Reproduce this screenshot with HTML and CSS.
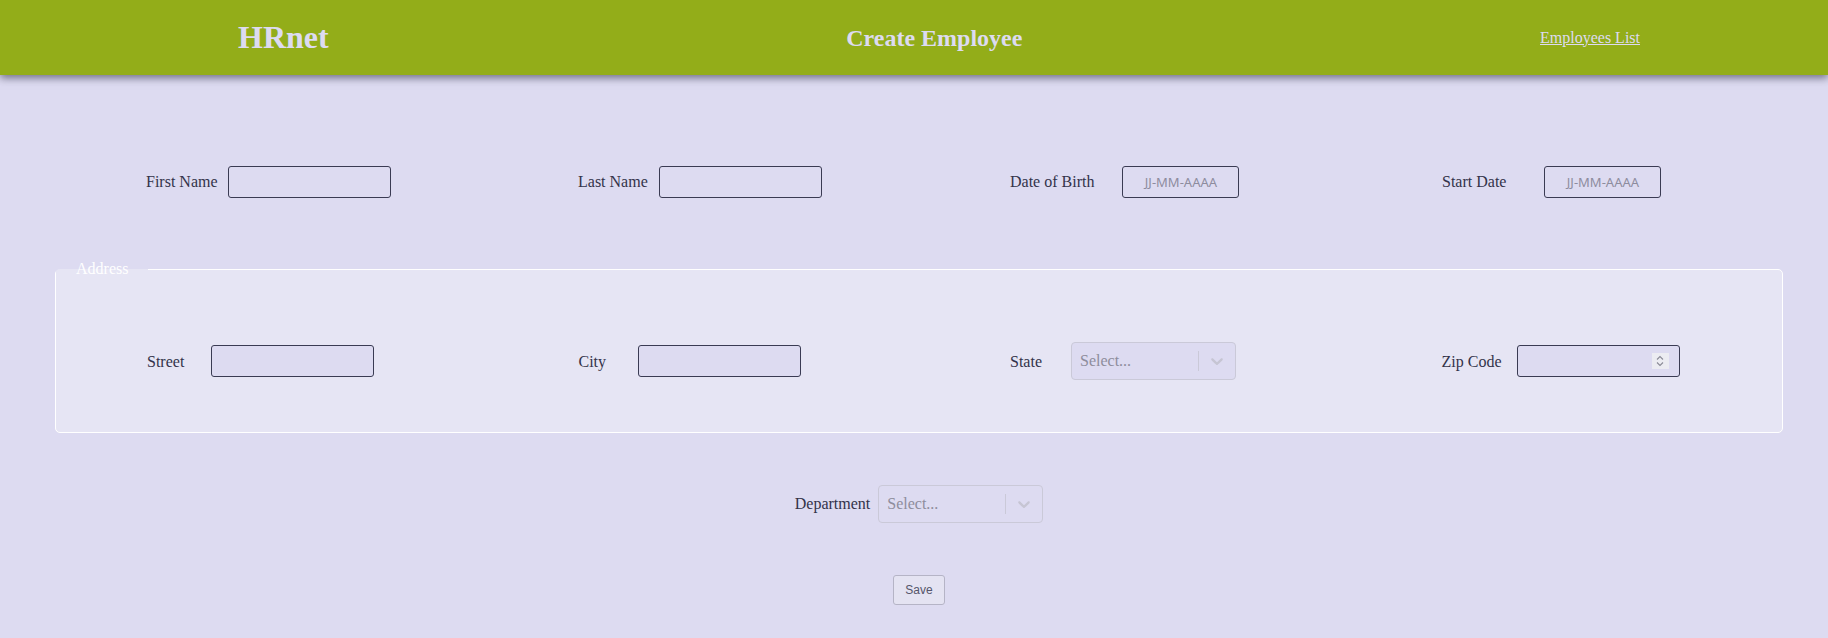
FILE: index.html
```html
<!DOCTYPE html>
<html lang="fr">
<head>
<meta charset="utf-8">
<title>HRnet - Create Employee</title>
<link rel="stylesheet" href="styles.css">
</head>
<body>
<header class="top-bar">
  <h1 class="brand">HRnet</h1>
  <h2 class="page-title">Create Employee</h2>
  <a class="nav-link" href="#">Employees List</a>
</header>
<main class="content">
  <form class="employee-form">
    <div class="field-row">
      <div class="field">
        <label class="field-label label-first" for="first-name">First Name</label>
        <input class="text-input" id="first-name" type="text">
      </div>
      <div class="field">
        <label class="field-label label-last" for="last-name">Last Name</label>
        <input class="text-input" id="last-name" type="text">
      </div>
      <div class="field">
        <label class="field-label label-birth" for="birth">Date of Birth</label>
        <input class="date-input" id="birth" type="text" placeholder="JJ-MM-AAAA">
      </div>
      <div class="field">
        <label class="field-label label-start" for="start">Start Date</label>
        <input class="date-input" id="start" type="text" placeholder="JJ-MM-AAAA">
      </div>
    </div>

    <fieldset class="address">
      <legend class="address-legend">Address</legend>
      <div class="field-row">
        <div class="field">
          <label class="field-label label-street" for="street">Street</label>
          <input class="text-input" id="street" type="text">
        </div>
        <div class="field">
          <label class="field-label label-city" for="city">City</label>
          <input class="text-input" id="city" type="text">
        </div>
        <div class="field">
          <label class="field-label label-state">State</label>
          <div class="select">
            <div class="select-value">Select...</div>
            <div class="select-indicators">
              <span class="select-separator"></span>
              <span class="select-arrow">
                <svg viewBox="0 0 20 20" width="20" height="20" aria-hidden="true"><path d="M4.516 7.548c0.436-0.446 1.043-0.481 1.576 0l3.908 3.747 3.908-3.747c0.533-0.481 1.141-0.446 1.574 0 0.436 0.445 0.408 1.197 0 1.615-0.406 0.418-4.695 4.502-4.695 4.502-0.217 0.223-0.502 0.335-0.787 0.335s-0.57-0.112-0.789-0.335c0 0-4.287-4.084-4.695-4.502s-0.436-1.170 0-1.615z"/></svg>
              </span>
            </div>
          </div>
        </div>
        <div class="field">
          <label class="field-label label-zip" for="zip">Zip Code</label>
          <div class="number-input">
            <input class="number-field" id="zip" type="text">
            <span class="spinner">
              <svg viewBox="0 0 16 16" width="16" height="16" aria-hidden="true"><path d="M5 6.5 L8 3.5 L11 6.5 M5 9.5 L8 12.5 L11 9.5" fill="none" stroke="#8a8a96" stroke-width="1.1"/></svg>
            </span>
          </div>
        </div>
      </div>
    </fieldset>

    <div class="department-row">
      <label class="field-label">Department</label>
      <div class="select">
        <div class="select-value">Select...</div>
        <div class="select-indicators">
          <span class="select-separator"></span>
          <span class="select-arrow">
            <svg viewBox="0 0 20 20" width="20" height="20" aria-hidden="true"><path d="M4.516 7.548c0.436-0.446 1.043-0.481 1.576 0l3.908 3.747 3.908-3.747c0.533-0.481 1.141-0.446 1.574 0 0.436 0.445 0.408 1.197 0 1.615-0.406 0.418-4.695 4.502-4.695 4.502-0.217 0.223-0.502 0.335-0.787 0.335s-0.57-0.112-0.789-0.335c0 0-4.287-4.084-4.695-4.502s-0.436-1.170 0-1.615z"/></svg>
          </span>
        </div>
      </div>
    </div>

    <div class="actions">
      <button class="save-button" type="button">Save</button>
    </div>
  </form>
</main>
</body>
</html>
```

FILE: styles.css
```css
* {
  box-sizing: border-box;
}

body {
  margin: 0;
  background: #dddbf1;
  font-family: "Liberation Serif", "Times New Roman", serif;
  font-size: 16px;
  color: #33334a;
}

/* Header */
.top-bar {
  position: relative;
  z-index: 1;
  height: 75px;
  background: #93ad19;
  display: flex;
  align-items: center;
  justify-content: space-between;
  padding: 0 188px 0 238px;
  box-shadow: 0 3px 8px rgba(40, 40, 60, 0.6);
  color: #dddbf1;
}

.brand {
  margin: 0;
  font-size: 32px;
  font-weight: bold;
  line-height: 37px;
}

.page-title {
  margin: 0;
  font-size: 24px;
  font-weight: bold;
  line-height: 28px;
}

.nav-link {
  color: #dddbf1;
  font-size: 16px;
  line-height: 18px;
}

/* Content */
.content {
  padding: 91px 45px 0 55px;
}

.field-row {
  display: grid;
  grid-template-columns: repeat(4, 1fr);
  align-items: center;
}

.field {
  display: flex;
  align-items: center;
  padding-left: 91px;
}

.field-label {
  line-height: 18px;
  white-space: nowrap;
}

.address .field-label {
  padding-top: 2px;
}

.label-first { margin-right: 10px; }
.label-last { margin-right: 11px; }
.label-birth { margin-right: 28px; }
.label-start { margin-right: 38px; }
.label-street { margin-right: 27px; }
.label-city { margin-right: 32px; }
.label-state { margin-right: 29px; }
.label-zip { margin-right: 15px; }

.text-input,
.date-input {
  height: 32px;
  border: 1px solid #3a3b53;
  border-radius: 3px;
  background: #dddbf1;
  padding: 1px 4px;
  font-family: "Noto Sans", "Liberation Sans", sans-serif;
  font-size: 13px;
  color: #33334a;
}

.text-input {
  width: 163px;
}

.date-input {
  width: 117px;
  text-align: center;
}

.date-input::placeholder {
  color: #8d8c9e;
}

/* Address fieldset */
.address {
  margin: 62px 0 0;
  padding: 64px 0 52px;
  border: 1px solid #ffffff;
  border-radius: 5px;
  background: #e6e5f4;
}

.address-legend {
  padding: 0 20px;
  color: #ffffff;
  line-height: 18px;
}

/* Select (react-select look) */
.select {
  display: flex;
  width: 165px;
  height: 38px;
  border: 1px solid #cac9d8;
  border-radius: 4px;
  background: #dddbf1;
}

.select-value {
  flex: 1;
  display: flex;
  align-items: center;
  padding: 2px 8px;
  color: #8e8d9c;
}

.select-indicators {
  display: flex;
  align-items: stretch;
}

.select-separator {
  width: 1px;
  margin: 8px 0;
  background: #cac9d8;
}

.select-arrow {
  display: flex;
  align-items: center;
  padding: 8px;
  color: #c6c5d3;
}

.select-arrow svg {
  fill: currentColor;
  display: block;
}

/* Number input with spinner */
.number-input {
  display: flex;
  align-items: center;
  width: 163px;
  height: 32px;
  border: 1px solid #3a3b53;
  border-radius: 3px;
  background: #dddbf1;
  padding: 0 10px 0 4px;
}

.number-field {
  flex: 1;
  min-width: 0;
  height: 100%;
  border: 0;
  background: transparent;
  outline: none;
  font-family: "Noto Sans", "Liberation Sans", sans-serif;
  font-size: 13px;
}

.spinner {
  display: flex;
  align-items: center;
  justify-content: center;
  width: 17px;
  height: 16px;
  background: #ececf2;
}

.spinner svg {
  display: block;
}

/* Department */
.department-row {
  display: flex;
  justify-content: center;
  align-items: center;
  gap: 8px;
  margin-top: 52px;
}

/* Actions */
.actions {
  display: flex;
  justify-content: center;
  margin-top: 52px;
}

.save-button {
  width: 52px;
  height: 30px;
  border: 1px solid #b5b4c6;
  border-radius: 3px;
  background: #e4e3f2;
  color: #55556a;
  font-family: "Liberation Sans", Arial, sans-serif;
  font-size: 12px;
  padding: 0;
}
```
